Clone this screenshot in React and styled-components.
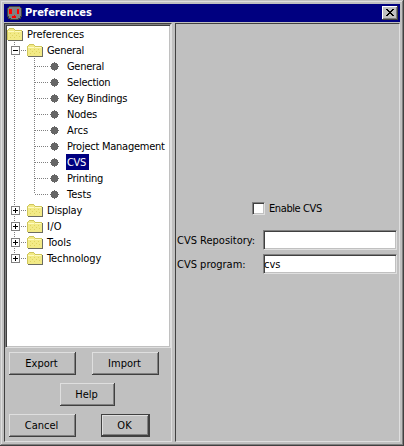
import React from "react";
import styled, { createGlobalStyle, css } from "styled-components";

const Global = createGlobalStyle`
  *{box-sizing:border-box}
  body{margin:0;background:#c0c0c0;overflow:hidden}
  svg{display:block;flex:none}
`;

const Frame = styled.div`
  width:404px;height:446px;background:#c0c0c0;color:#000;
  font:11px/16px "DejaVu Sans Condensed","DejaVu Sans",sans-serif;
  font-stretch:condensed;
  box-shadow:inset -1px -1px #404040,inset 1px 1px #c0c0c0,inset -2px -2px #808080,inset 2px 2px #dfdfdf;
  padding:4px;
`;
const TitleBar = styled.header`
  height:18px;background:#000080;display:flex;align-items:center;padding:0 2px 0 3px;
`;
const Title = styled.h1`
  margin:0 auto 0 3px;color:#fff;font-size:11px;line-height:18px;font-weight:bold;
`;
const CloseButton = styled.button`
  width:16px;height:14px;padding:0;border:0;background:#c0c0c0;display:flex;
  box-shadow:inset -1px -1px #404040,inset 1px 1px #fff,inset -2px -2px #808080;
`;
const Body = styled.main`
  display:flex;height:419px;margin-top:1px;
`;
const pane = css`
  border:1px solid;border-color:#404040 #dfdfdf #dfdfdf #404040;
`;
const well = css`
  background:#fff;border:1px solid;border-color:#808080 #dfdfdf #dfdfdf #808080;
  box-shadow:inset 1px 1px #404040,inset -1px -1px #c0c0c0;
`;
const LeftPane = styled.section`
  width:168px;${pane}
`;
const RightPane = styled.section`
  width:225px;margin-left:3px;${pane}
  padding:176px 2px 0 1px;
`;
const Tree = styled.ul`
  list-style:none;margin:0;padding:1px;height:324px;${well}
`;
const Row = styled.li`
  height:16px;display:flex;align-items:center;white-space:pre;
`;
const Label = styled.span`
  height:16px;line-height:17px;padding:0 1px;margin-left:${p => p.$gap || 3}px;
  letter-spacing:${p => p.$track || 0}px;
  ${p => p.$on && "background:#000080;color:#fff;width:23px;"}
`;
const Buttons = styled.div`
  display:grid;row-gap:8px;padding:4px 0 0 4px;
`;
const ButtonRow = styled.div`
  display:flex;gap:${p => p.$gap || 0}px;padding-left:${p => p.$left || 0}px;
`;
const Button = styled.button`
  width:${p => p.$w}px;height:23px;padding:0 2px 0 0;font:inherit;line-height:20px;background:#c0c0c0;border:0;
  box-shadow:${p => p.$primary
    ? "inset 0 0 0 1px #404040,inset -2px -2px #404040,inset 2px 2px #dfdfdf,inset -3px -3px #808080"
    : "inset -1px -1px #404040,inset 1px 1px #dfdfdf,inset -2px -2px #808080"};
`;
const CheckLine = styled.label`
  display:flex;align-items:center;height:17px;padding-left:75px;gap:4px;letter-spacing:-.4px;
`;
const Box = styled.span`
  width:13px;height:13px;${well}
`;
const Field = styled.label`
  display:flex;align-items:center;height:20px;margin-top:${p => p.$top}px;
`;
const FieldName = styled.span`
  width:86px;line-height:18px;padding-top:1px;white-space:pre;
`;
const Input = styled.input`
  width:134px;height:20px;font:inherit;padding:1px 0 0;outline:0;${well}
`;

const Folder = () => (
  <svg width="16" height="16" shapeRendering="crispEdges">
    <path d="M1 3h1V2h5v1h1v1h7v10H0V4h1z" fill="#f2ea86" />
    <path d="M0 4h1v10H0zM1 3h1v1H1zM2 2h5v1H2zM7 3h1v1H7zM8 4h7v1H8z" fill="#cfc65c" />
    <path d="M1 5h6v1H1zM8 5h6v1H8z" fill="#fffbc0" />
    <path d="M3 7h1v1H3zM7 7h1v1H7zM11 7h1v1h-1zM5 9h1v1H5zM9 9h1v1H9zM12 10h1v1h-1zM3 11h1v1H3zM7 11h1v1H7z" fill="#e0d460" />
    <path d="M15 5h1v10H1v-1h14z" fill="#6c6c60" />
  </svg>
);

const Guides = ({ kind, last, open }) => {
  const dots = { stroke: "#808080", strokeDasharray: "1 1", fill: "none" };
  if (kind === "leaf")
    return (
      <svg width="54" height="16" shapeRendering="crispEdges">
        <path d="M7.500 0V16" {...dots} />
        <path d={last ? "M27.500 0V8" : "M27.500 0V16"} {...dots} />
        <path d="M28 8.500H42" {...dots} />
        <path d="M47 4h1v1h2v1h1v2h1v1h-1v2h-1v1h-2v1h-1v-1h-2v-1h-1v-2h-1v-1h1v-2h1v-1h2z" fill="#666" />
      </svg>
    );
  return (
    <svg width="20" height="16" shapeRendering="crispEdges">
      <path d={last ? "M7.500 0V8" : "M7.500 0V16"} {...dots} />
      <path d="M14 8.500H20" {...dots} />
      <path d="M4.500 4.500h8v8h-8z" fill="#fff" stroke="#808080" />
      <path d={open ? "M6 8h5v1h-5z" : "M6 8h2v-2h1v2h2v1h-2v2h-1v-2h-2z"} fill="#000" />
    </svg>
  );
};

const leaves = [
  ["General", -0.3], ["Selection", -0.25], ["Key Bindings", -0.3], ["Nodes", -0.2], ["Arcs", 0],
  ["Project Management", -0.25], ["CVS", -0.4], ["Printing", -0.25], ["Tests", 0],
];
const groups = [["Display", -0.2], ["I/O", 0.3], ["Tools", 0], ["Technology", -0.1]];

export default function App() {
  return (
    <>
      <Global />
      <Frame>
        <TitleBar>
          <svg width="15" height="14" shapeRendering="crispEdges">
            <path d="M2 0h11v1h1v1h1v9h-1v2h-2v1H3v-1H1v-2H0V2h1V1h1z" fill="#404040" />
            <path d="M2 1h11v1h1v8h-1v2h-2v1H4v-1H2v-2H1V2h1z" fill="#808080" />
            <path d="M2 3h3v5H2zM10 3h2v5h-2zM7 9h1v1h1v2H5v-2h2z" fill="#f00" />
          </svg>
          <Title>Preferences</Title>
          <CloseButton aria-label="Close">
            <svg width="16" height="14" shapeRendering="crispEdges">
              <path d="M4 3h2v1h1v1h2V4h1V3h2v1h-1v1h-1v1H9v1h1v1h1v1h1v1h-2V9H9V8H7v1H6v1H4V9h1V8h1V7h1V6H6V5H5V4H4z" />
            </svg>
          </CloseButton>
        </TitleBar>
        <Body>
          <LeftPane>
            <Tree>
              <Row><Folder /><Label $track={-0.1}>Preferences</Label></Row>
              <Row><Guides open /><Folder /><Label $track={-0.3}>General</Label></Row>
              {leaves.map(([text, track], i) => (
                <Row key={text}>
                  <Guides kind="leaf" last={i === leaves.length - 1} />
                  <Label $gap={5} $track={track} $on={text === "CVS"}>{text}</Label>
                </Row>
              ))}
              {groups.map(([text, track], i) => (
                <Row key={text}>
                  <Guides last={i === groups.length - 1} />
                  <Folder />
                  <Label $track={track}>{text}</Label>
                </Row>
              ))}
            </Tree>
            <Buttons>
              <ButtonRow $gap={16}><Button $w={67}>Export</Button><Button $w={67}>Import</Button></ButtonRow>
              <ButtonRow $left={51}><Button $w={55}>Help</Button></ButtonRow>
              <ButtonRow $gap={25}><Button $w={67}>Cancel</Button><Button $w={49} $primary>OK</Button></ButtonRow>
            </Buttons>
          </LeftPane>
          <RightPane>
            <CheckLine><Box />Enable CVS</CheckLine>
            <Field $top={13}><FieldName>CVS Repository:</FieldName><Input aria-label="CVS Repository" /></Field>
            <Field $top={4}><FieldName>CVS program:</FieldName><Input defaultValue="cvs" /></Field>
          </RightPane>
        </Body>
      </Frame>
    </>
  );
}
